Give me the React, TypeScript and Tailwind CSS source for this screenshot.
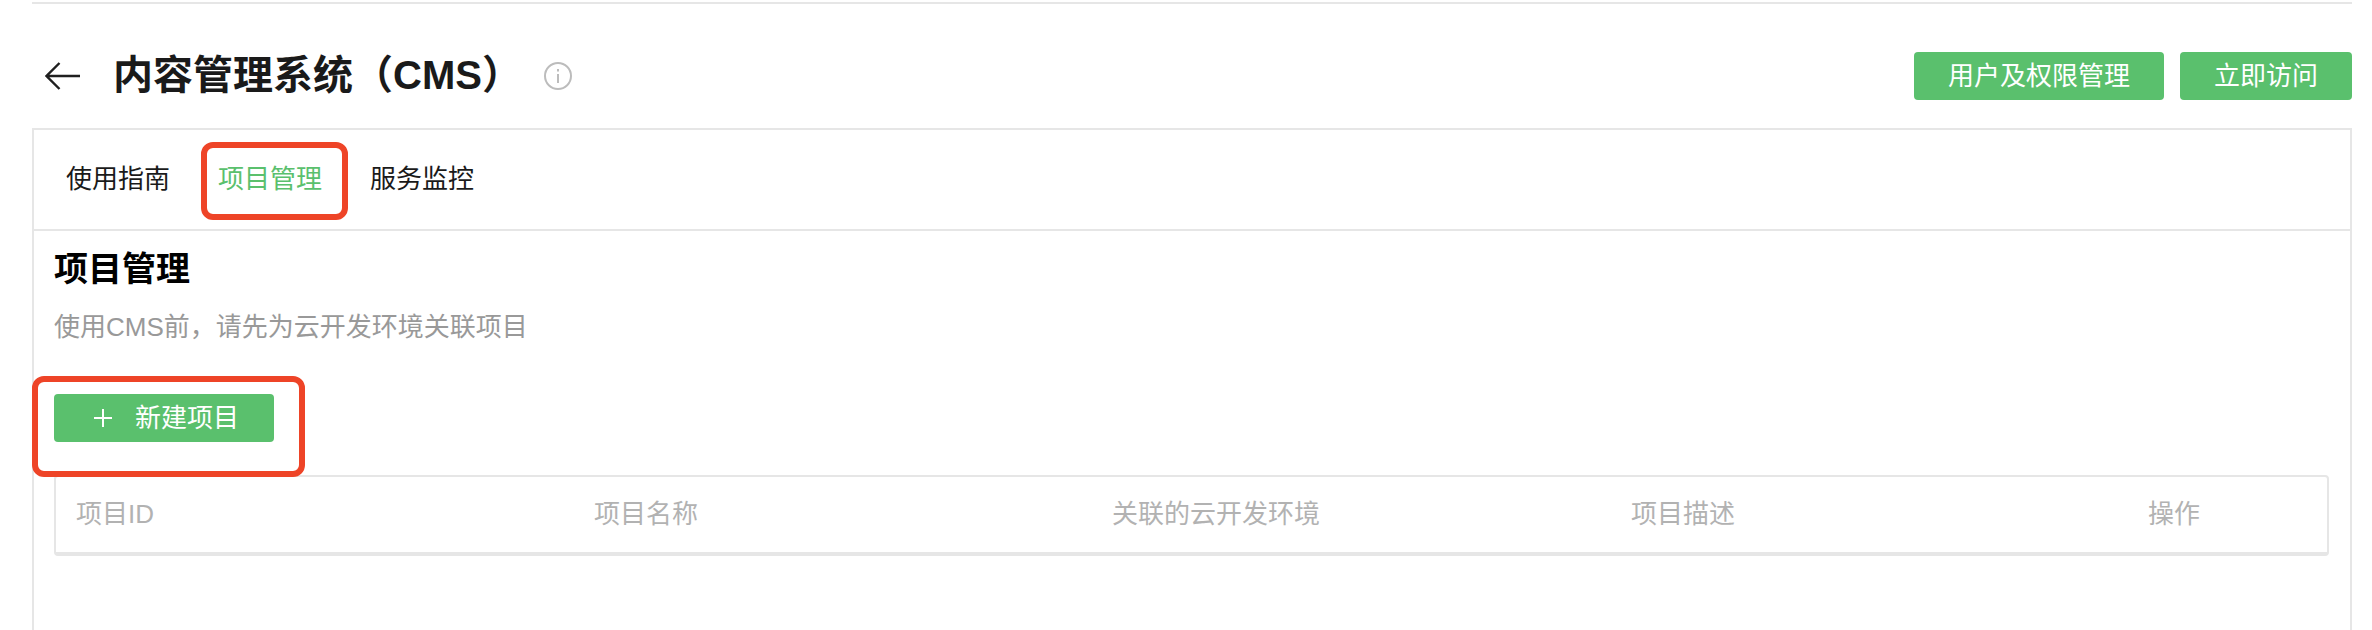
import React from "react";

const FONT = "font-['Liberation_Sans','Noto_Sans_CJK_SC',sans-serif]";

const tabs = ["使用指南", "项目管理", "服务监控"];

const columns = [
  { label: "项目ID", width: "w-[518px]" },
  { label: "项目名称", width: "w-[518px]" },
  { label: "关联的云开发环境", width: "w-[519px]" },
  { label: "项目描述", width: "w-[517px]" },
  { label: "操作", width: "w-[100px]" },
];

const App: React.FC = () => {
  return (
    <div className={`relative h-[630px] w-[2372px] overflow-hidden bg-white pl-8 pr-5 pt-0.5 ${FONT}`}>
      <div className="h-0.5 bg-[#e6e6e6]"></div>

      {/* Header */}
      <header className="mt-12 flex h-12 items-center justify-between">
        <div className="flex items-center">
          <svg className="ml-[13px] h-7 w-[35px]" viewBox="0 0 35 28" fill="none" stroke="#1f1f1f" strokeWidth="2.4">
            <path d="M35 14H1.5M14.5 1 1.5 14l13 13" />
          </svg>
          <h1 className="ml-[33px] -translate-y-px text-[40px] leading-[48px] font-semibold text-[#1a1a1a]">内容管理系统（CMS）</h1>
          <svg className="ml-[22px] h-7 w-7" viewBox="0 0 28 28" fill="none" stroke="#bcbcbc" strokeWidth="2">
            <circle cx="14" cy="14" r="13" />
            <path d="M14 12v9M14 7v2.5" />
          </svg>
        </div>
        <div className="flex gap-4">
          <button className="h-12 w-[250px] rounded bg-[#5ac06d] text-[26px] text-white">用户及权限管理</button>
          <button className="h-12 w-[172px] rounded bg-[#5ac06d] text-[26px] text-white">立即访问</button>
        </div>
      </header>

      {/* Panel */}
      <div className="mt-7 h-[520px] border-2 border-[#e6e6e6] bg-white">
        <div className="flex h-[101px] items-center gap-12 border-b-2 border-[#e6e6e6] pl-[32px]">
          {tabs.map((tab, idx) => (
            <span key={tab} className={`text-[26px] ${idx === 1 ? "text-[#5ac06d]" : "text-[#1a1a1a]"}`}>
              {tab}
            </span>
          ))}
        </div>

        <div className="pl-5 pr-[21px]">
          <h2 className="mt-[14px] text-[34px] leading-[48px] font-bold text-black">项目管理</h2>
          <p className="mt-4 text-[26px] leading-9 text-[#999999]">使用CMS前，请先为云开发环境关联项目</p>
          <button className="mt-[49px] flex h-12 w-[220px] items-center rounded bg-[#5ac06d] pl-10 text-[26px] text-white">
            <svg className="h-[18px] w-[18px]" viewBox="0 0 18 18" fill="none" stroke="#ffffff" strokeWidth="2">
              <path d="M9 0v18M0 9h18" />
            </svg>
            <span className="ml-[23px]">新建项目</span>
          </button>

          {/* Table */}
          <div className="mt-[33px] flex h-[81px] items-center rounded border-x-2 border-t-2 border-b-4 border-[#e6e6e6] pl-5">
            {columns.map((col) => (
              <div key={col.label} className={`${col.width} shrink-0 text-[26px] text-[#b2b2b2]`}>
                {col.label}
              </div>
            ))}
          </div>
        </div>
      </div>

      {/* Red annotation boxes */}
      <div className="absolute left-[201px] top-[142px] h-[78px] w-[147px] rounded-[12px] border-[6px] border-[#ee4427]"></div>
      <div className="absolute left-8 top-[376px] h-[101px] w-[273px] rounded-[12px] border-[6px] border-[#ee4427]"></div>
    </div>
  );
};

export default App;
